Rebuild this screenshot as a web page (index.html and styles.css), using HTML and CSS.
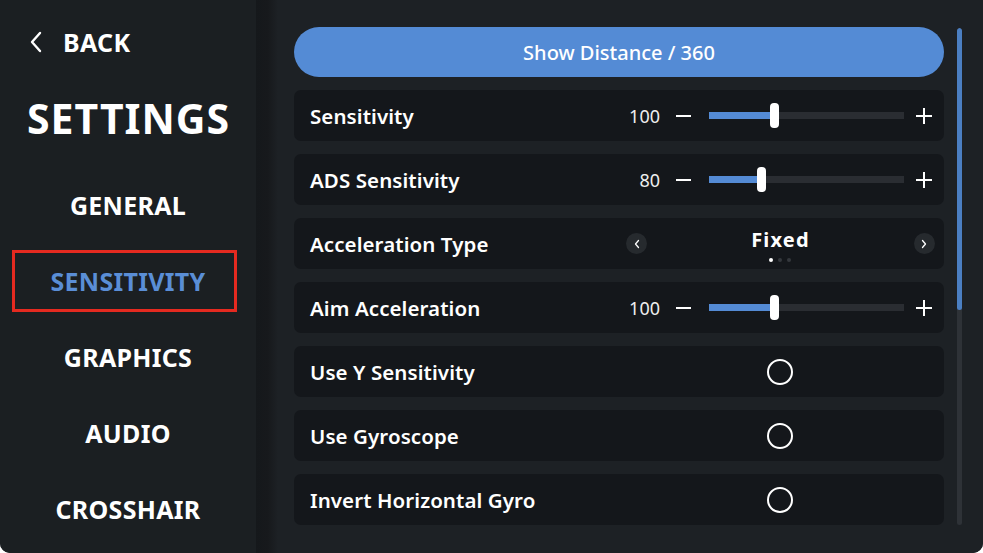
FILE: index.html
```html
<!DOCTYPE html>
<html>
<head>
<meta charset="utf-8">
<link rel="stylesheet" href="styles.css">
</head>
<body>
<div class="app">
  <aside class="sidebar">
    <div class="back">
      <svg class="back-icon" width="14" height="22" viewBox="0 0 14 22"><path d="M11 2 L3 11 L11 20" fill="none" stroke="#fff" stroke-width="2.4" stroke-linecap="round" stroke-linejoin="round"/></svg>
      <span>BACK</span>
    </div>
    <h1 class="title">SETTINGS</h1>
    <nav class="menu">
      <div class="menu-item">GENERAL</div>
      <div class="menu-item active">SENSITIVITY</div>
      <div class="menu-item">GRAPHICS</div>
      <div class="menu-item">AUDIO</div>
      <div class="menu-item">CROSSHAIR</div>
    </nav>
  </aside>
  <main class="main">
    <div class="content">
      <button class="distance-btn">Show Distance / 360</button>
      <div class="row">
        <span class="label">Sensitivity</span>
        <div class="slider">
          <span class="value">100</span>
          <span class="minus"></span>
          <div class="track"><div class="fill" style="width:65px"></div><div class="thumb" style="left:61px"></div></div>
          <span class="plus"></span>
        </div>
      </div>
      <div class="row">
        <span class="label">ADS Sensitivity</span>
        <div class="slider">
          <span class="value">80</span>
          <span class="minus"></span>
          <div class="track"><div class="fill" style="width:52px"></div><div class="thumb" style="left:48px"></div></div>
          <span class="plus"></span>
        </div>
      </div>
      <div class="row">
        <span class="label">Acceleration Type</span>
        <div class="selector">
          <span class="arrow"><svg width="8" height="10" viewBox="0 0 8 10"><path d="M5.5 1.5 L2.5 5 L5.5 8.5" fill="none" stroke="#fff" stroke-width="1.3" stroke-linecap="round" stroke-linejoin="round"/></svg></span>
          <div class="sel-center">
            <span class="sel-value">Fixed</span>
            <div class="dots"><i class="dot on"></i><i class="dot"></i><i class="dot"></i></div>
          </div>
          <span class="arrow"><svg width="8" height="10" viewBox="0 0 8 10"><path d="M2.5 1.5 L5.5 5 L2.5 8.5" fill="none" stroke="#fff" stroke-width="1.3" stroke-linecap="round" stroke-linejoin="round"/></svg></span>
        </div>
      </div>
      <div class="row">
        <span class="label">Aim Acceleration</span>
        <div class="slider">
          <span class="value">100</span>
          <span class="minus"></span>
          <div class="track"><div class="fill" style="width:65px"></div><div class="thumb" style="left:61px"></div></div>
          <span class="plus"></span>
        </div>
      </div>
      <div class="row">
        <span class="label">Use Y Sensitivity</span>
        <div class="toggle-wrap"><span class="toggle"></span></div>
      </div>
      <div class="row">
        <span class="label">Use Gyroscope</span>
        <div class="toggle-wrap"><span class="toggle"></span></div>
      </div>
      <div class="row">
        <span class="label">Invert Horizontal Gyro</span>
        <div class="toggle-wrap"><span class="toggle"></span></div>
      </div>
    </div>
    <div class="scrollbar"><div class="scroll-thumb"></div></div>
  </main>
</div>
</body>
</html>
```

FILE: styles.css
```css
* { box-sizing: border-box; }
html, body { margin: 0; padding: 0; }
body {
  background: #ffffff;
  font-family: "Noto Sans", "DejaVu Sans", sans-serif;
  color: #fff;
}
.app {
  width: 983px;
  height: 553px;
  display: flex;
  overflow: hidden;
  border-radius: 0 0 10px 10px;
  background: #1d2125;
}
.sidebar {
  width: 256px;
  flex: none;
  background: #1b1f22;
  display: flex;
  flex-direction: column;
}
.back {
  display: flex;
  align-items: center;
  margin: 26px 0 0 29px;
  height: 32px;
  font-weight: 700;
  font-size: 25px;
  letter-spacing: 0.3px;
}
.back-icon { margin-right: 20px; }
.title {
  margin: 30px 0 0 0;
  text-align: center;
  font-size: 41px;
  font-weight: 700;
  letter-spacing: 1px;
  line-height: 60px;
  padding-left: 1px;
}
.menu {
  margin-top: 19px;
  display: flex;
  flex-direction: column;
  align-items: center;
}
.menu-item {
  height: 76px;
  width: 100%;
  display: flex;
  align-items: center;
  justify-content: center;
  font-size: 25px;
  font-weight: 700;
  letter-spacing: 0.3px;
}
.menu-item.active {
  color: #5a8ed6;
  width: 225px;
  height: 62px;
  margin: 7px 0;
  border: 3px solid #e52a20;
  align-self: flex-start;
  margin-left: 12px;
  padding-left: 7px;
}
.main {
  flex: 1;
  display: flex;
  padding: 27px 0 0 38px;
  background: linear-gradient(to right, #15181b 0px, #17191c 12px, #1d2125 22px);
}
.content {
  width: 650px;
  display: flex;
  flex-direction: column;
  gap: 13px;
}
.distance-btn {
  height: 50px;
  border: none;
  border-radius: 25px;
  background: #548bd5;
  color: #fff;
  font-family: inherit;
  font-size: 20px;
  font-weight: 500;
  padding: 0;
  margin-bottom: 0;
}
.row {
  height: 51px;
  border-radius: 7px;
  background: #14171b;
  display: flex;
  align-items: center;
  padding-left: 16px;
  position: relative;
}
.label {
  font-size: 20.5px;
  font-weight: 600;
  letter-spacing: 0.08px;
  width: 300px;
  padding-top: 1px;
}
.slider {
  display: flex;
  align-items: center;
  margin-left: auto;
}
.value {
  font-size: 18px;
  width: 60px;
  text-align: right;
  color: #eee;
}
.minus {
  width: 15px;
  height: 2px;
  background: #fff;
  margin-left: 16px;
}
.track {
  position: relative;
  width: 195px;
  height: 7px;
  background: #2a2d32;
  margin-left: 18px;
}
.fill {
  position: absolute;
  left: 0; top: 0; bottom: 0;
  background: #548bd5;
}
.thumb {
  position: absolute;
  top: -9px;
  width: 9px;
  height: 25px;
  border-radius: 4px;
  background: #fff;
}
.plus {
  position: relative;
  width: 16px;
  height: 16px;
  margin: 0 12px 0 12px;
}
.plus::before, .plus::after {
  content: "";
  position: absolute;
  background: #fff;
}
.plus::before { left: 0; right: 0; top: 7px; height: 2px; }
.plus::after { top: 0; bottom: 0; left: 7px; width: 2px; }
.selector {
  margin-left: auto;
  width: 318px;
  display: flex;
  align-items: center;
  justify-content: space-between;
  padding-right: 9px;
  margin-top: 0;
}
.arrow {
  width: 21px;
  height: 21px;
  border-radius: 50%;
  background: #262a2e;
  display: flex;
  align-items: center;
  justify-content: center;
}
.sel-center {
  display: flex;
  flex-direction: column;
  align-items: center;
  padding-top: 0;
  margin-top: 2px;
}
.sel-value {
  font-size: 20px;
  font-weight: 700;
  letter-spacing: 1.2px;
  line-height: 26px;
}
.dots { display: flex; gap: 5px; margin-top: 5px; }
.dot { width: 4px; height: 4px; border-radius: 50%; background: #34383d; }
.dot.on { background: #fff; }
.toggle-wrap {
  position: absolute;
  left: 473px;
  top: 13px;
}
.toggle {
  display: block;
  width: 26px;
  height: 26px;
  border: 2px solid #fff;
  border-radius: 50%;
}
.scrollbar {
  width: 5px;
  height: 497px;
  margin: 1px 0 0 13px;
  border-radius: 3px;
  background: #2e3237;
  overflow: hidden;
}
.scroll-thumb {
  height: 282px;
  background: #4b7fc2;
  border-radius: 3px;
}
```
